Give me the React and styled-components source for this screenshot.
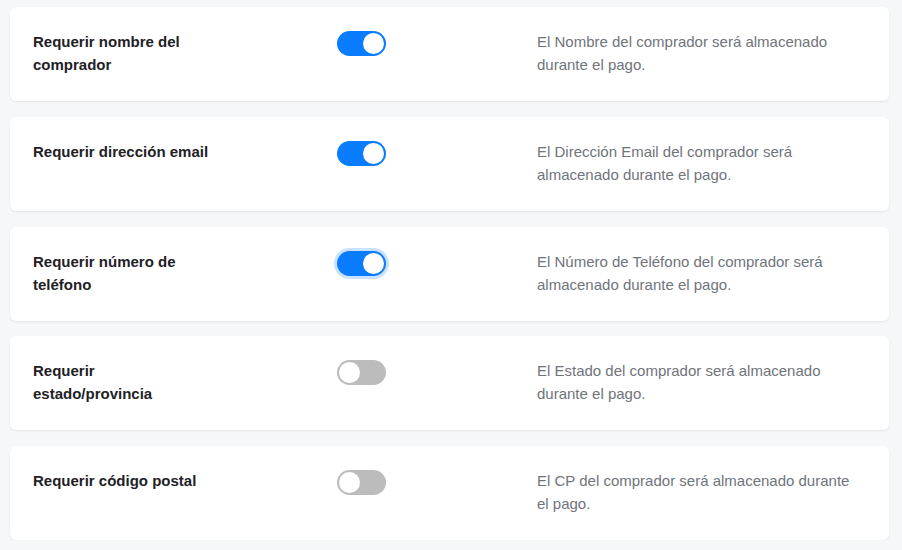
import React from "react";
import styled, { createGlobalStyle } from "styled-components";

const Global = createGlobalStyle`
  html, body { margin: 0; padding: 0; background: #f6f7f9; }
  body { font-family: "Liberation Sans", Arial, sans-serif; }
`;

const Page = styled.div`
  padding: 7px 13px 0 10px;
  display: flex;
  flex-direction: column;
  gap: 15.75px;
`;

const Card = styled.div`
  background: #fff;
  border-radius: 6px;
  box-shadow: 0 1px 2px rgba(0, 0, 0, 0.08);
  height: 94px;
  box-sizing: border-box;
  padding: 23px 23px 0 23px;
  display: grid;
  grid-template-columns: 304px 200px 1fr;
  align-items: start;
`;

const Title = styled.div`
  font-weight: bold;
  font-size: 15px;
  line-height: 23px;
  color: #1e2125;
  max-width: 182px;
`;

const Track = styled.div`
  margin-top: 1px;
  width: 49px;
  height: 25px;
  border-radius: 13px;
  box-sizing: border-box;
  background: ${(p) => (p.$on ? "#0a7cff" : "#bcbcbc")};
  position: relative;
  box-shadow: ${(p) => (p.$focus ? "0 0 0 3px rgba(10, 124, 255, 0.22)" : "none")};
`;

const Knob = styled.div`
  position: absolute;
  top: 2px;
  left: ${(p) => (p.$on ? "26px" : "2px")};
  width: 21px;
  height: 21px;
  border-radius: 50%;
  background: #fff;
`;

const Desc = styled.div`
  font-size: 15px;
  line-height: 23px;
  color: #6f747b;
  max-width: 324px;
`;

const rows = [
  { t: "Requerir nombre del comprador", on: true, d: "El Nombre del comprador será almacenado durante el pago." },
  { t: "Requerir dirección email", on: true, d: "El Dirección Email del comprador será almacenado durante el pago." },
  { t: "Requerir número de teléfono", on: true, focus: true, d: "El Número de Teléfono del comprador será almacenado durante el pago." },
  { t: "Requerir estado/provincia", on: false, d: "El Estado del comprador será almacenado durante el pago." },
  { t: "Requerir código postal", on: false, d: "El CP del comprador será almacenado durante el pago." },
];

export default function App() {
  return (
    <>
      <Global />
      <Page>
        {rows.map((r) => (
          <Card key={r.t}>
            <Title>{r.t}</Title>
            <Track $on={r.on} $focus={r.focus}>
              <Knob $on={r.on} />
            </Track>
            <Desc>{r.d}</Desc>
          </Card>
        ))}
      </Page>
    </>
  );
}
